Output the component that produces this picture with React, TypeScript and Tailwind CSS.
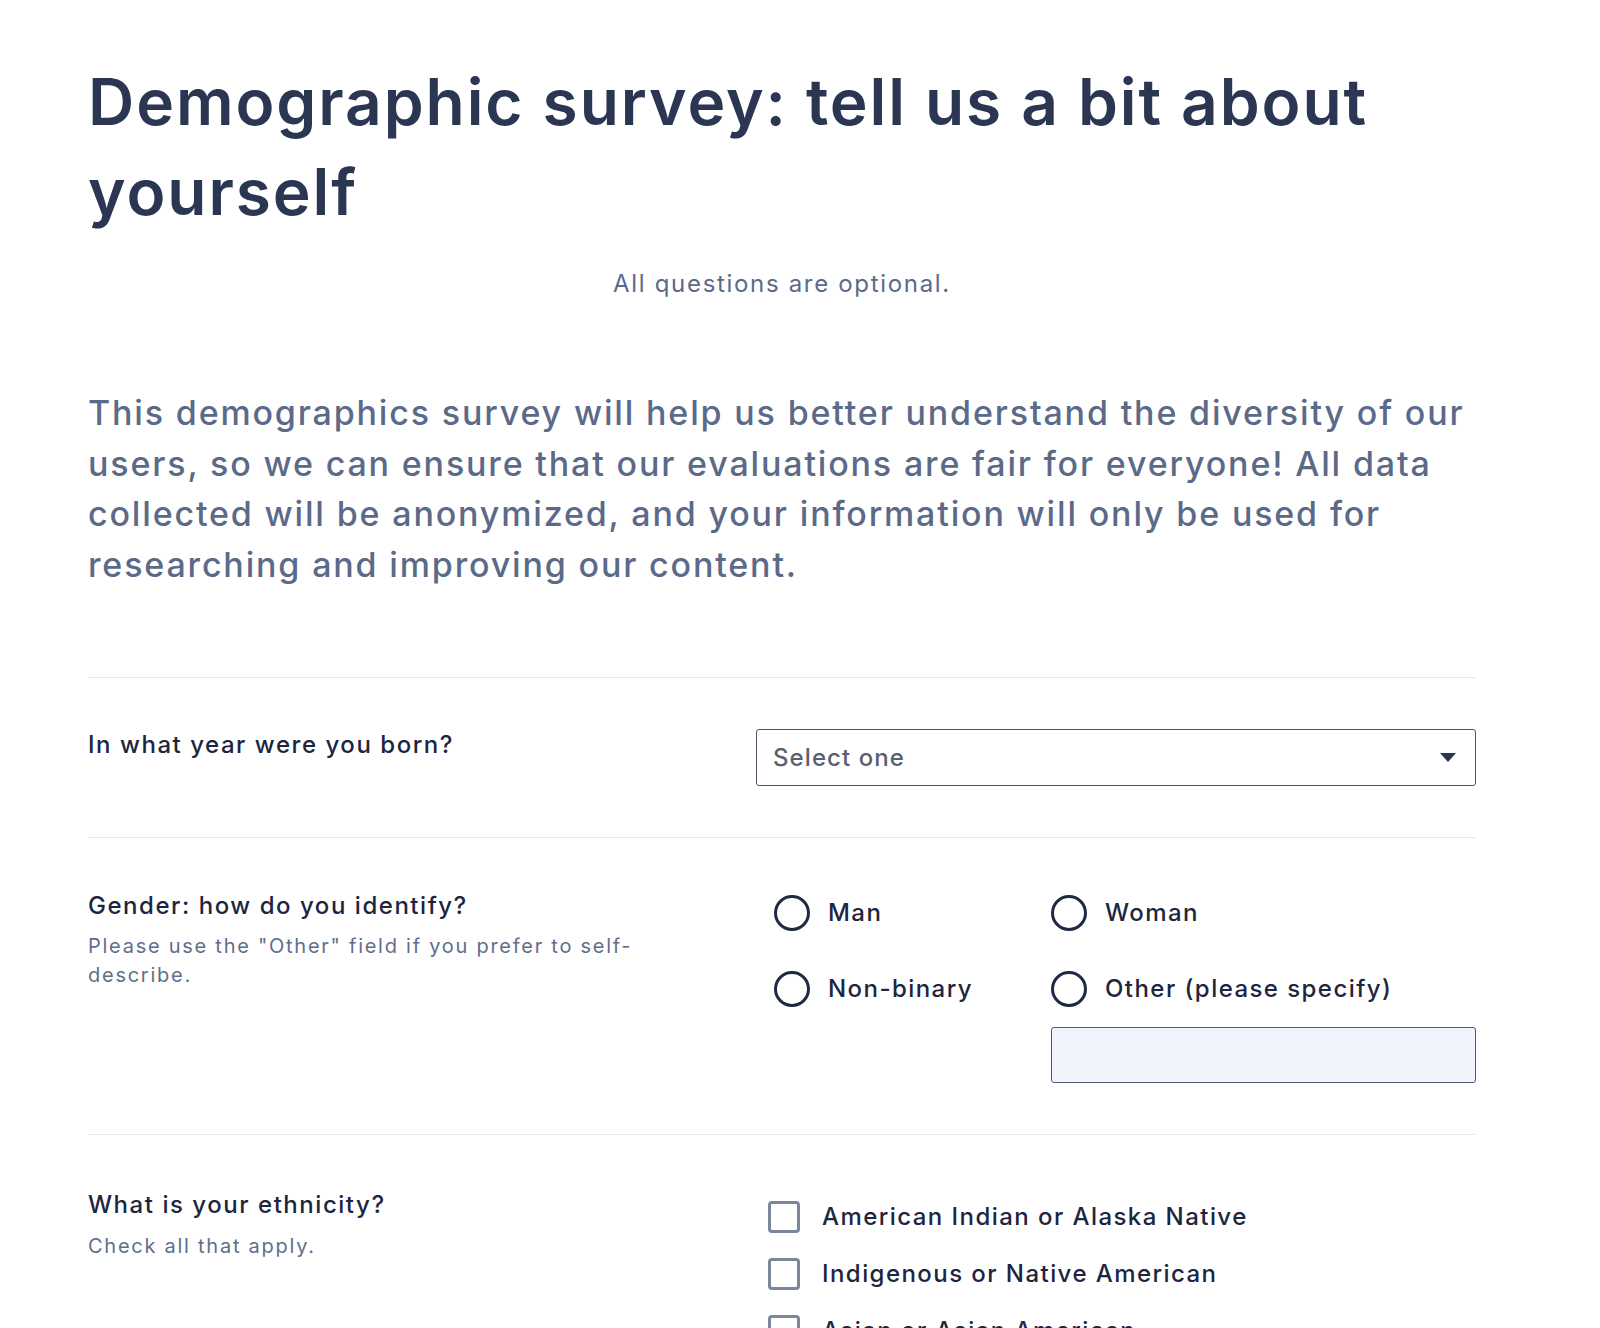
import { useState } from "react";

const years = Array.from({ length: 90 }, (_, i) => String(2010 - i));

function Radio({ label, checked, onChange }: { label: string; checked: boolean; onChange: () => void }) {
  return (
    <label className="flex items-center h-[36px] cursor-pointer">
      <input type="radio" className="sr-only" checked={checked} onChange={onChange} />
      <span className="w-[36px] h-[36px] rounded-full border-[3px] border-[#1f2a40] flex items-center justify-center flex-shrink-0">
        {checked && <span className="w-[18px] h-[18px] rounded-full bg-[#1f2a40]" />}
      </span>
      <span className="ml-[18px] text-[24px] leading-[32px] font-medium tracking-[0.06em] text-[#1c2640]">
        {label}
      </span>
    </label>
  );
}

function Checkbox({ label, checked, onChange }: { label: string; checked: boolean; onChange: () => void }) {
  return (
    <label className="flex items-center h-[32px] cursor-pointer">
      <input type="checkbox" className="sr-only" checked={checked} onChange={onChange} />
      <span className="w-[32px] h-[32px] rounded-[4px] border-[3px] border-[#7b879b] flex items-center justify-center flex-shrink-0">
        {checked && (
          <svg viewBox="0 0 20 20" className="w-[20px] h-[20px]" fill="none" stroke="#1f2a40" strokeWidth="3">
            <path d="M4 10l4 4 8-8" />
          </svg>
        )}
      </span>
      <span className="ml-[22px] text-[24px] leading-[32px] font-medium tracking-[0.06em] text-[#1c2640]">
        {label}
      </span>
    </label>
  );
}

const ethnicities = [
  "American Indian or Alaska Native",
  "Indigenous or Native American",
  "Asian or Asian American",
];

export default function App() {
  const [gender, setGender] = useState("");
  const [picked, setPicked] = useState<string[]>([]);

  const toggle = (e: string) =>
    setPicked((p) => (p.includes(e) ? p.filter((x) => x !== e) : [...p, e]));

  return (
    <div className="min-h-screen bg-white font-['Inter',sans-serif]">
      <div className="pl-[88px] pr-[124px] pt-[57px] pb-[80px]">
        <h1 className="text-[64px] leading-[90px] font-semibold tracking-[0.03em] text-[#2a3652]">
          Demographic survey: tell us a bit about yourself
        </h1>
        <p className="mt-[31px] text-center text-[24px] leading-[32px] tracking-[0.07em] text-[#5b6a88]">
          All questions are optional.
        </p>
        <p className="mt-[88px] text-[34px] leading-[50.5px] font-medium tracking-[0.054em] text-[#5b6a88]">
          This demographics survey will help us better understand the diversity of our users, so we
          can ensure that our evaluations are fair for everyone! All data collected will be
          anonymized, and your information will only be used for researching and improving our
          content.
        </p>

        <div className="mt-[87px] border-t border-[#e1e6f0] pt-[51px] pb-[51px] flex">
          <div className="w-[668px] flex-shrink-0">
            <p className="text-[24px] leading-[32px] font-medium tracking-[0.064em] text-[#1c2640]">
              In what year were you born?
            </p>
          </div>
          <div className="flex-1 relative">
            <select
              defaultValue=""
              className="appearance-none w-full h-[57px] border-[1.5px] border-[#4b5568] rounded-[3px] pl-[16px] pr-[48px] text-[24px] font-medium tracking-[0.045em] text-[#5a6070] bg-white"
            >
              <option value="" disabled>
                Select one
              </option>
              {years.map((y) => (
                <option key={y}>{y}</option>
              ))}
            </select>
            <svg
              viewBox="0 0 16 9"
              className="absolute right-[20px] top-[24px] w-[16px] h-[9px] pointer-events-none"
            >
              <path d="M0 0h16L8 9z" fill="#2a3550" />
            </svg>
          </div>
        </div>

        <div className="border-t border-[#e1e6f0] pt-[52px] pb-[51px] flex">
          <div className="w-[668px] flex-shrink-0">
            <p className="text-[24px] leading-[32px] font-medium tracking-[0.064em] text-[#1c2640]">
              Gender: how do you identify?
            </p>
            <p className="mt-[10px] max-w-[600px] text-[20px] leading-[29px] tracking-[0.087em] text-[#5f6e8b]">
              Please use the "Other" field if you prefer to self-describe.
            </p>
          </div>
          <div className="flex-1 pt-[5px] pl-[18px]">
            <div className="grid grid-cols-[277px_1fr] gap-y-[40px]">
              <Radio label="Man" checked={gender === "man"} onChange={() => setGender("man")} />
              <Radio label="Woman" checked={gender === "woman"} onChange={() => setGender("woman")} />
              <Radio label="Non-binary" checked={gender === "nb"} onChange={() => setGender("nb")} />
              <Radio
                label="Other (please specify)"
                checked={gender === "other"}
                onChange={() => setGender("other")}
              />
            </div>
            <div className="grid grid-cols-[277px_1fr] mt-[20px]">
              <div />
              <input
                type="text"
                className="h-[56px] border-[1.5px] border-[#4f5b70] rounded-[3px] bg-[#f0f4fd] px-[14px] text-[22px] text-[#1c2640] outline-none"
              />
            </div>
          </div>
        </div>

        <div className="border-t border-[#e1e6f0] pt-[54px] flex">
          <div className="w-[668px] flex-shrink-0">
            <p className="text-[24px] leading-[32px] font-medium tracking-[0.064em] text-[#1c2640]">
              What is your ethnicity?
            </p>
            <p className="mt-[11px] text-[20px] leading-[29px] tracking-[0.087em] text-[#5f6e8b]">
              Check all that apply.
            </p>
          </div>
          <div className="flex-1 pt-[12px] pl-[12px] flex flex-col gap-[25px]">
            {ethnicities.map((e) => (
              <Checkbox key={e} label={e} checked={picked.includes(e)} onChange={() => toggle(e)} />
            ))}
          </div>
        </div>
      </div>
    </div>
  );
}
